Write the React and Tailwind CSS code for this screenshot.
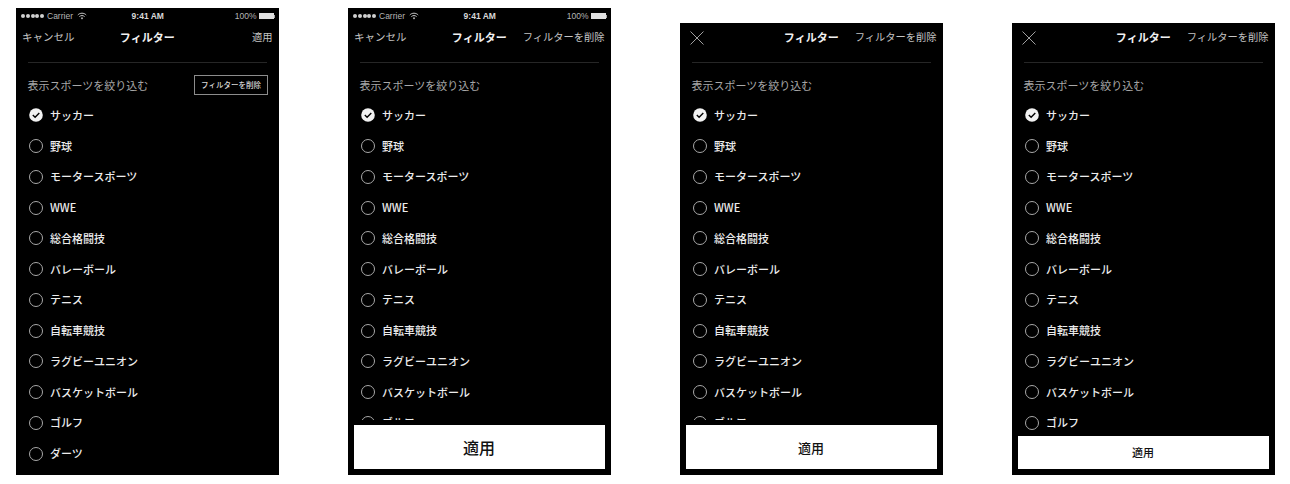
const SPORTS = [
  'サッカー',
  '野球',
  'モータースポーツ',
  'WWE',
  '総合格闘技',
  'バレーボール',
  'テニス',
  '自転車競技',
  'ラグビーユニオン',
  'バスケットボール',
  'ゴルフ',
  'ダーツ',
];

const FONT = "font-['Noto_Sans_CJK_JP','Noto_Sans',sans-serif]";

function StatusBar() {
  return (
    <div className="h-[15px] shrink-0 grid grid-cols-[1fr_auto_1fr] items-center pl-[5px] pr-[4px] pt-[1px] font-['Liberation_Sans',sans-serif] text-[8.5px] leading-none text-[#b5b5b5]">
      <div className="flex items-center">
        <div className="flex gap-[0.75px]">
          {[0, 1, 2, 3, 4].map((i) => (
            <span key={i} className="w-[4px] h-[4px] rounded-full bg-[#d0d0d0]" />
          ))}
        </div>
        <span className="ml-[3px]">Carrier</span>
        <svg className="ml-[4px]" width="10" height="8" viewBox="0 0 10 8" fill="none" stroke="#c8c8c8" strokeWidth="1">
          <path d="M0.8 3 C3 0.6 7 0.6 9.2 3" />
          <path d="M2.4 4.6 C3.8 3.2 6.2 3.2 7.6 4.6" />
          <path d="M5 7.4 L3.8 6 C4.5 5.4 5.5 5.4 6.2 6 Z" fill="#c8c8c8" stroke="none" />
        </svg>
      </div>
      <span className="font-bold text-[#d8d8d8]">9:41 AM</span>
      <div className="flex items-center justify-end">
        <span>100%</span>
        <div className="ml-[2px] w-[15px] h-[6px] bg-[#e0e0e0]" />
        <div className="w-[1px] h-[3px] bg-[#aaa]" />
      </div>
    </div>
  );
}

function CheckIcon() {
  return (
    <svg width="14" height="14" viewBox="0 0 14 14" className="shrink-0">
      <circle cx="7" cy="7" r="6.8" fill="#f2f2f2" />
      <path d="M3.8 7.1 L6.1 9.3 L10.3 5" fill="none" stroke="#000" strokeWidth="1.4" />
    </svg>
  );
}

function CloseIcon() {
  return (
    <svg className="ml-[4px] mt-[2px]" width="14" height="14" viewBox="0 0 14 14" fill="none" stroke="#c8c8c8" strokeWidth="0.8">
      <path d="M0.5 0.5 L13.5 13.5 M13.5 0.5 L0.5 13.5" />
    </svg>
  );
}

function SportRow({ name, checked }) {
  return (
    <div className="h-[30.75px] shrink-0 flex items-center gap-[7px]">
      {checked ? (
        <CheckIcon />
      ) : (
        <span className="w-[14px] h-[14px] shrink-0 rounded-full border border-[#a8a8a8]" />
      )}
      <span className="text-[11px] font-medium leading-none text-[#ececec]">{name}</span>
    </div>
  );
}

function FilterPanel({ heightClass, statusBar, left, right, inlineClear, footerClass, applyClass, applyLabelClass }) {
  return (
    <div className={`${heightClass} w-[262.5px] shrink-0 bg-black flex flex-col ${FONT}`}>
      {statusBar && <StatusBar />}
      <div className="h-[28px] shrink-0 grid grid-cols-[1fr_auto_1fr] items-center px-[6px]">
        <div className="text-[10.5px] leading-none text-[#c4c4c4]">{left}</div>
        <div className="text-[11px] font-bold leading-none text-[#f0f0f0]">フィルター</div>
        <div className="text-[10.25px] leading-none text-[#c4c4c4] text-right">{right}</div>
      </div>
      <div className="mt-[11px] ml-3 mr-[11.5px] h-[1px] shrink-0 bg-[#262626]" />
      <div className="flex-1 min-h-0 overflow-hidden pl-[13px]">
        <div className="h-[37px] flex items-center justify-between pr-[10.5px] pt-[7px]">
          <span className="-ml-[1.5px] text-[11px] leading-none text-[#a8a8a8]">表示スポーツを絞り込む</span>
          {inlineClear && (
            <span className="w-[74px] h-[20px] flex items-center justify-center border border-[#8c8c8c] text-[7.5px] font-medium leading-none text-[#d8d8d8]">
              フィルターを削除
            </span>
          )}
        </div>
        {SPORTS.map((name, i) => (
          <SportRow key={name} name={name} checked={i === 0} />
        ))}
      </div>
      {applyClass && (
        <div className={`${footerClass} shrink-0 pl-[5.5px] pr-[6px] pb-[6px]`}>
          <div className={`${applyClass} bg-white flex items-center justify-center`}>
            <span className={`${applyLabelClass} font-medium leading-none text-[#111]`}>適用</span>
          </div>
        </div>
      )}
    </div>
  );
}

export default function App() {
  return (
    <div className="w-[1290px] h-[484px] bg-white flex items-start pl-4 gap-[69.5px]">
      <div className="pt-[8px]">
        <FilterPanel
          heightClass="h-[467px]"
          statusBar
          left="キャンセル"
          right="適用"
          inlineClear
        />
      </div>
      <div className="pt-[8px]">
        <FilterPanel
          heightClass="h-[467px]"
          statusBar
          left="キャンセル"
          right="フィルターを削除"
          footerClass="pt-[5px]"
          applyClass="h-[44px]"
          applyLabelClass="text-[16px]"
        />
      </div>
      <div className="pt-[23px]">
        <FilterPanel
          heightClass="h-[452px]"
          left={<CloseIcon />}
          right="フィルターを削除"
          footerClass="pt-[5px]"
          applyClass="h-[44px]"
          applyLabelClass="text-[13px]"
        />
      </div>
      <div className="pt-[23px]">
        <FilterPanel
          heightClass="h-[452px]"
          left={<CloseIcon />}
          right="フィルターを削除"
          footerClass="pt-0"
          applyClass="h-[33px]"
          applyLabelClass="text-[11px]"
        />
      </div>
    </div>
  );
}
